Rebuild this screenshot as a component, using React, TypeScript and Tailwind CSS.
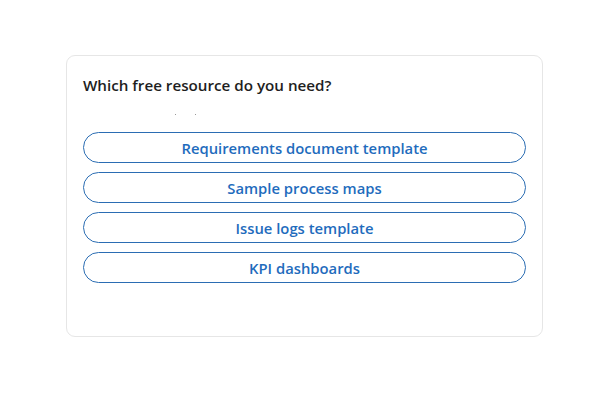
export default function App() {
  const options = [
    "Requirements document template",
    "Sample process maps",
    "Issue logs template",
    "KPI dashboards",
  ];
  return (
    <div
      className="w-[600px] h-[400px] bg-white pt-[55px] pl-[66px]"
      style={{ fontFamily: '"Open Sans", "Noto Sans", sans-serif' }}
    >
      <div className="w-[477px] h-[282px] rounded-[9px] border border-[#e6e6e6] bg-white px-[16px] pt-[18px]">
        <div className="text-[15.2px] leading-[22px] font-semibold text-[#1e1e1e]">
          Which free resource do you need?
        </div>
        <div className="h-[36px] flex items-start pt-[18px] pl-[92px] gap-[19px]">
          <span className="block w-[1px] h-[1px] bg-[#9a9a9a]" />
          <span className="block w-[1px] h-[1px] bg-[#9a9a9a]" />
        </div>
        <div className="flex flex-col gap-[9px]">
          {options.map((o) => (
            <button
              key={o}
              className="w-[443px] h-[31px] rounded-full border border-[#2b6db3] text-[#1f6cbd] text-[14.8px] font-semibold flex items-center justify-center pt-[2px]"
            >
              {o}
            </button>
          ))}
        </div>
      </div>
    </div>
  );
}
